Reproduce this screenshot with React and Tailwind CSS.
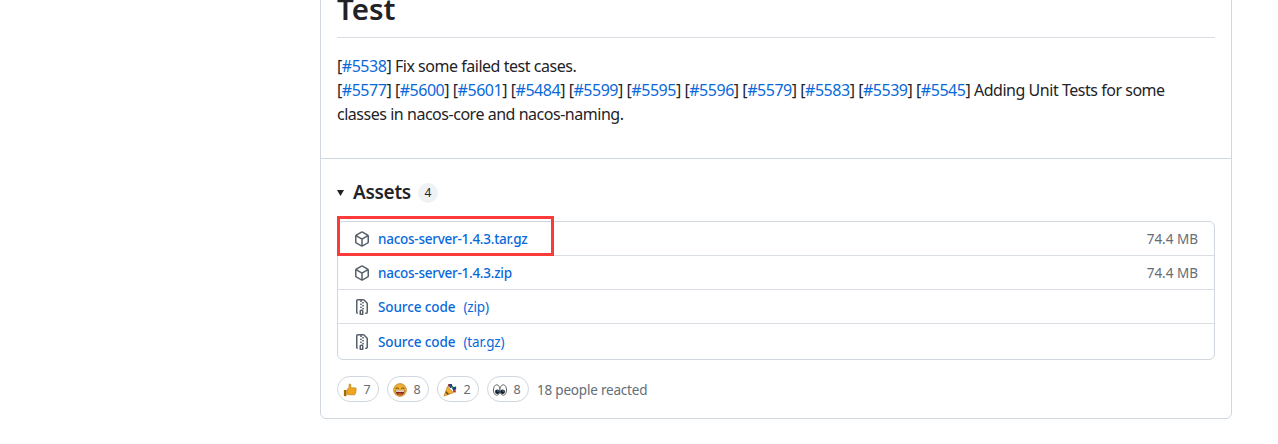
import React from 'react';

const PackageIcon = () => (
  <svg width="16" height="16" viewBox="0 0 16 16" fill="#57606a" className="shrink-0">
    <path d="m8.878.392 5.25 3.045c.54.314.872.89.872 1.514v6.098a1.75 1.75 0 0 1-.872 1.514l-5.25 3.045a1.75 1.75 0 0 1-1.756 0l-5.25-3.045A1.75 1.75 0 0 1 1 11.049V4.951c0-.624.332-1.201.872-1.514L7.122.392a1.75 1.75 0 0 1 1.756 0ZM7.875 1.69l-4.63 2.685L8 7.133l4.755-2.758-4.63-2.685a.248.248 0 0 0-.25 0ZM2.5 5.677v5.372c0 .09.047.171.125.216l4.625 2.683V8.432Zm6.25 8.271 4.625-2.683a.25.25 0 0 0 .125-.216V5.677L8.75 8.432Z" />
  </svg>
);

const ZipIcon = () => (
  <svg width="16" height="16" viewBox="0 0 16 16" fill="#57606a" className="shrink-0">
    <path d="M3.5 1.75v11.5c0 .09.048.173.126.217a.75.75 0 0 1-.752 1.298A1.748 1.748 0 0 1 2 13.25V1.75C2 .784 2.784 0 3.75 0h5.586c.464 0 .909.185 1.237.513l2.914 2.914c.329.328.513.773.513 1.237v8.586A1.75 1.75 0 0 1 12.25 15h-.5a.75.75 0 0 1 0-1.5h.5a.25.25 0 0 0 .25-.25V4.664a.25.25 0 0 0-.073-.177L9.513 1.573a.25.25 0 0 0-.177-.073H7.25a.75.75 0 0 1 0 1.5h-.5a.75.75 0 0 1 0-1.5h-3a.25.25 0 0 0-.25.25Zm3.75 8.75h.5c.966 0 1.75.784 1.75 1.75v3a.75.75 0 0 1-.75.75h-2.5a.75.75 0 0 1-.75-.75v-3c0-.966.784-1.75 1.75-1.75ZM6 5.25a.75.75 0 0 1 .75-.75h.5a.75.75 0 0 1 0 1.5h-.5A.75.75 0 0 1 6 5.25Zm.75 2.25h.5a.75.75 0 0 1 0 1.5h-.5a.75.75 0 0 1 0-1.5ZM8 6.75A.75.75 0 0 1 8.75 6h.5a.75.75 0 0 1 0 1.5h-.5A.75.75 0 0 1 8 6.75ZM8.75 3h.5a.75.75 0 0 1 0 1.5h-.5a.75.75 0 0 1 0-1.5ZM8 9.75A.75.75 0 0 1 8.75 9h.5a.75.75 0 0 1 0 1.5h-.5A.75.75 0 0 1 8 9.75Zm-1 2.5v2.25h1v-2.25a.25.25 0 0 0-.25-.25h-.5a.25.25 0 0 0-.25.25Z" />
  </svg>
);

const Thumb = () => (
  <svg width="14" height="14" viewBox="0 0 16 16">
    <path d="M1 8h3v7H1z" fill="#a66a00" />
    <path d="M4.500 8 7 4.500V1.600c0-.8 1.700-.8 2 .4.200 1 0 2.400-.3 3.500H14c1.300 0 1.500 1.500.7 2 .8.500.6 1.800-.2 2.100.5.600.3 1.700-.5 2 .3.900-.2 1.900-1.200 1.900H7c-1 0-1.700-.4-2.500-.8z" fill="#f0a51e" stroke="#a8700c" strokeWidth=".6" />
  </svg>
);

const Laugh = () => (
  <svg width="14" height="14" viewBox="0 0 16 16">
    <circle cx="8" cy="8" r="7.300" fill="#eeb034" stroke="#a8701a" strokeWidth=".7" />
    <path d="M3 6.500 Q4.500 4.500 6.500 6.500M9.500 6.500Q11.500 4.500 13 6.500" fill="none" stroke="#4a3310" strokeWidth="1" />
    <path d="M2.800 8.500h10.400c0 3.200-2.300 5.500-5.200 5.500s-5.200-2.300-5.200-5.500z" fill="#7a2c14" />
    <path d="M3.400 8.500h9.200v1.500H3.400z" fill="#fff" />
    <path d="M5 12.500q3-2 6 0-3 2-6 0z" fill="#e0544f" />
  </svg>
);

const Party = () => (
  <svg width="14" height="14" viewBox="0 0 16 16">
    <path d="M1 15 5 4l7 7z" fill="#f0b02e" stroke="#a8700c" strokeWidth=".6" />
    <path d="M3.500 9 7 12.500 5 13.500 2.800 11z" fill="#7a4a10" />
    <path d="M6 1l4 0 1 3-3 2zM10 5l5-1 0 3-3 2z" fill="#1d3f7a" />
    <path d="M6 1.500l2 1-1 2-1.500-1zM12 8l3 .5-1 2.500-2.500-1z" fill="#b52a2a" />
    <path d="M10 3l2 1-1 2-2-1z" fill="#2c8a3f" />
  </svg>
);

const Eyes = () => (
  <svg width="14" height="14" viewBox="0 0 16 16">
    <ellipse cx="4.300" cy="8" rx="3.800" ry="6" fill="#fff" stroke="#444" strokeWidth=".9" />
    <ellipse cx="11.700" cy="8" rx="3.800" ry="6" fill="#fff" stroke="#444" strokeWidth=".9" />
    <circle cx="5" cy="10" r="2.700" fill="#14202e" />
    <circle cx="11" cy="10" r="2.700" fill="#14202e" />
    <circle cx="5.600" cy="9.200" r=".8" fill="#5aa0e0" />
    <circle cx="11.600" cy="9.200" r=".8" fill="#5aa0e0" />
  </svg>
);

const Issue = ({ id }) => (
  <>
    [<a className="text-[#0969da]">#{id}</a>]
  </>
);

const lineTwo = ['5577', '5600', '5601', '5484', '5599', '5595', '5596', '5579', '5583', '5539', '5545'];

const assets = [
  { icon: PackageIcon, name: 'nacos-server-1.4.3.tar.gz', size: '74.4 MB', row: 'h-[33px]' },
  { icon: PackageIcon, name: 'nacos-server-1.4.3.zip', size: '74.4 MB', row: 'h-[34px]' },
  { icon: ZipIcon, name: 'Source code', suffix: '(zip)', row: 'h-[34px]' },
  { icon: ZipIcon, name: 'Source code', suffix: '(tar.gz)', row: 'h-[36px]' },
];

const reactions = [
  { icon: Thumb, count: 7 },
  { icon: Laugh, count: 8 },
  { icon: Party, count: 2 },
  { icon: Eyes, count: 8 },
];

export default function App() {
  return (
    <div className="h-[444px] overflow-hidden bg-white font-['Noto_Sans',sans-serif] text-[#1f2328]">
      <div className="ml-[320px] mt-[-20px] w-[912px] rounded-b-md border border-[#d0d7de] bg-white">
        <div className="px-4 pb-[32px]">
          <h2 className="h-[57px] border-b border-[#d8dee4] text-[29.5px] font-semibold leading-[55px]">Test</h2>
          <div className="mt-[16px] text-[16px] leading-[24px] tracking-[-0.47px]">
            <div>
              <Issue id="5538" /> Fix some failed test cases.
            </div>
            <div>
              {lineTwo.map((id) => (
                <span key={id}>
                  <Issue id={id} />{' '}
                </span>
              ))}
              Adding Unit Tests for some classes in nacos-core and nacos-naming.
            </div>
          </div>
        </div>

        <div className="border-t border-[#d0d7de] px-4 pb-[16px] pt-[20px]">
          <div className="flex h-[26px] items-center">
            <svg width="7" height="6" viewBox="0 0 7 6" fill="#1f2328" className="mt-[2px]">
              <path d="M0 0h7L3.500 6z" />
            </svg>
            <span className="ml-[9px] text-[19px] font-semibold tracking-[-0.3px]">Assets</span>
            <span className="ml-[7px] mt-[2px] flex h-[20px] min-w-[20px] items-center justify-center rounded-full bg-[#eff2f5] text-[12px]">4</span>
          </div>

          <div className="relative mt-[16px] rounded-md border border-[#d0d7de]">
            {assets.map((asset, i) => {
              const Icon = asset.icon;
              return (
                <div key={i} className={`flex items-center border-t border-[#d8dee4] px-4 pt-[1px] first:border-t-0 ${asset.row}`}>
                  <Icon />
                  <span className={`ml-[8px] text-[13.5px] font-medium text-[#0969da] ${asset.size ? 'tracking-[-0.26px]' : 'tracking-[-0.1px]'}`}>{asset.name}</span>
                  {asset.suffix && <span className="ml-[8px] text-[13.5px] tracking-[-0.15px] text-[#0969da]">{asset.suffix}</span>}
                  {asset.size && <span className="ml-auto text-[13.5px] text-[#656d76]">{asset.size}</span>}
                </div>
              );
            })}
            <div className="absolute left-[-1px] top-[-6px] h-[40px] w-[217px] border-[3px] border-[#fb3a3a]" />
          </div>

          <div className="mt-[16px] flex items-center">
            {reactions.map((r, i) => {
              const Icon = r.icon;
              return (
                <div key={i} className="mr-[8px] flex h-[26px] w-[42px] items-center rounded-full border border-[#d0d7de] pl-[5px] pt-[2px]">
                  <Icon />
                  <span className="ml-[5px] flex-1 pr-[6px] text-center text-[12.5px] text-[#656d76]">{r.count}</span>
                </div>
              );
            })}
            <span className="pt-[3px] text-[13.5px] tracking-[-0.2px] text-[#656d76]">18 people reacted</span>
          </div>
        </div>
      </div>
    </div>
  );
}
